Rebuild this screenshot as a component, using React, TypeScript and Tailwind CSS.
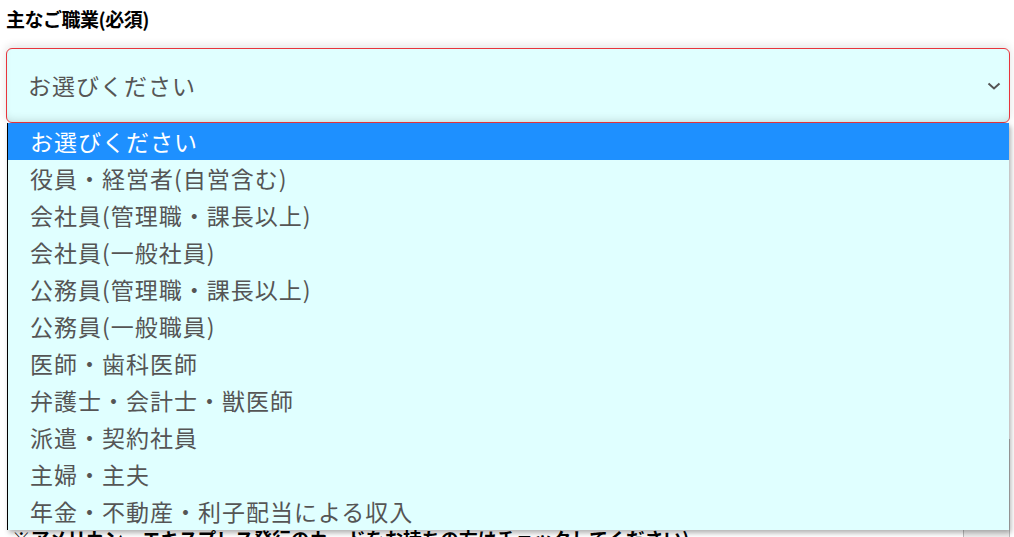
import { useState } from 'react';

const options = [
  'お選びください',
  '役員・経営者(自営含む)',
  '会社員(管理職・課長以上)',
  '会社員(一般社員)',
  '公務員(管理職・課長以上)',
  '公務員(一般職員)',
  '医師・歯科医師',
  '弁護士・会計士・獣医師',
  '派遣・契約社員',
  '主婦・主夫',
  '年金・不動産・利子配当による収入',
];

const font = { fontFamily: '"Noto Sans CJK JP", "Noto Sans", sans-serif' };

export default function App() {
  const [selected] = useState(0);

  return (
    <div className="h-[537px] w-[1014px] overflow-hidden bg-white text-black" style={font}>
      <div className="pl-[6px] pr-[4px] pt-[6px]">
        <label className="block text-[19px] font-bold leading-[26px] tracking-[-0.5px]">主なご職業(必須)</label>

        <div className="relative mt-[16px]">
          {/* closed select face */}
          <div className="flex h-[75px] items-center justify-between rounded-[6px] border border-[#e8343c] bg-[#e0ffff] pl-[21px] pr-[8px] shadow-[0_-2px_10px_rgba(0,0,0,0.12),inset_0_-6px_8px_-4px_rgba(0,0,0,0.12)]">
            <span className="text-[23px] tracking-[1px] text-[#555]">{options[selected]}</span>
            <svg width="14" height="8" viewBox="0 0 14 8" fill="none">
              <polyline points="1.5,1.5 7,6.5 12.5,1.5" stroke="#555" strokeWidth="2" />
            </svg>
          </div>

          {/* open option list */}
          <ul className="absolute left-[1px] right-[1px] top-[75px] z-10 border-l border-black bg-[#e0ffff] shadow-[2px_3px_5px_rgba(0,0,0,0.3)]">
            {options.map((o, i) => (
              <li
                key={o}
                className={`flex h-[37px] items-center pl-[22px] text-[23px] tracking-[1px] ${
                  i === selected ? 'bg-[#1e90ff] text-white' : 'text-[#555]'
                }`}
              >
                {o}
              </li>
            ))}
          </ul>
        </div>

        {/* fields hidden behind the list */}
        <div className="flex flex-col gap-[14px] pt-[20px]">
          <div className="h-[90px]" />
          <div className="h-[90px]" />
          <div className="flex h-[198px] items-end justify-between">
            <p className="pl-[6px] text-[18.7px] font-bold leading-[22px]">
              ※アメリカン・エキスプレス発行のカードをお持ちの方はチェックしてください)
            </p>
            <div className="h-[110px] w-[47px] border border-[#bbb] bg-[#eee]" />
          </div>
        </div>
      </div>
    </div>
  );
}
